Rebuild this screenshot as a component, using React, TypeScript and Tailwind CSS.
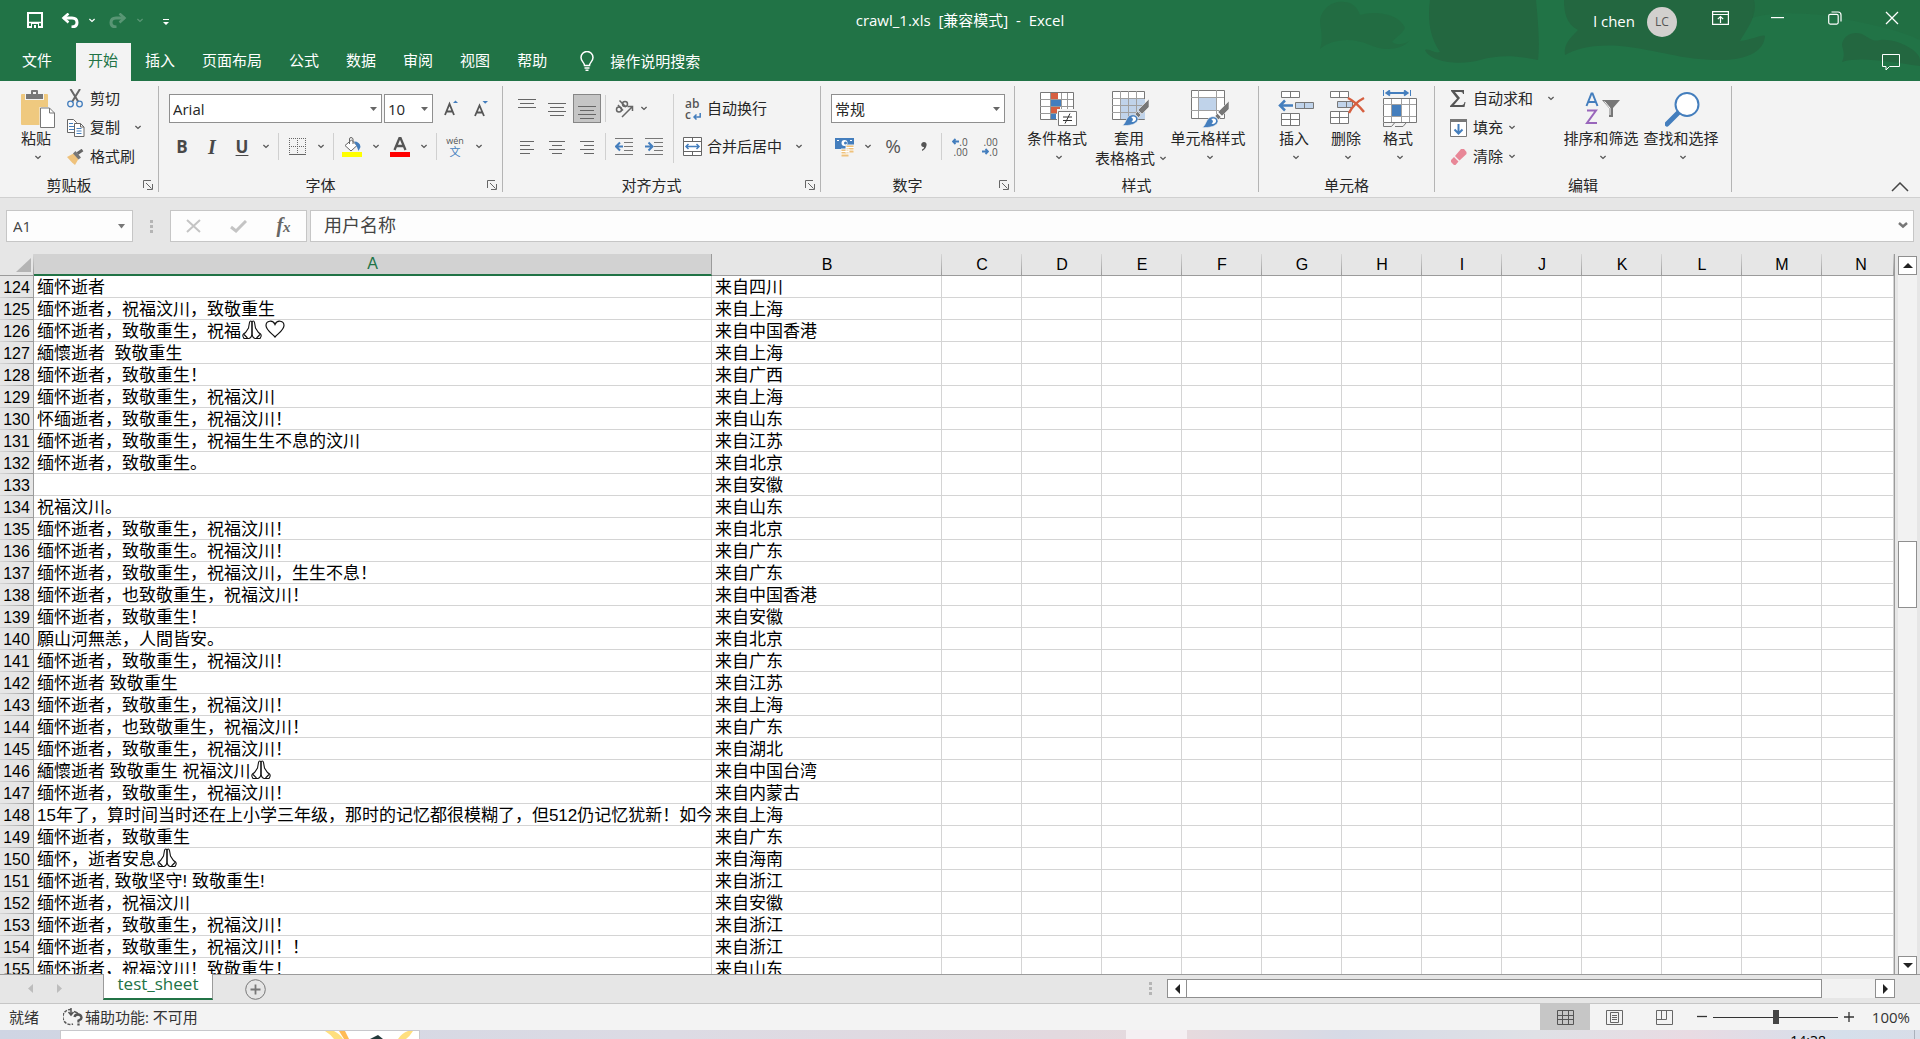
import type { ReactNode } from "react";

const UI_FONT = "font-['Open_Sans','Noto_Sans_CJK_SC',sans-serif]";
const CELL_FONT = "font-['Liberation_Sans','Noto_Sans_CJK_SC',sans-serif]";

type Row = { n: number; text: string; from: string; hands?: boolean; heart?: boolean };

const rows: Row[] = [
  { n: 124, text: "缅怀逝者", from: "来自四川" },
  { n: 125, text: "缅怀逝者，祝福汶川，致敬重生", from: "来自上海" },
  { n: 126, text: "缅怀逝者，致敬重生，祝福", from: "来自中国香港", hands: true, heart: true },
  { n: 127, text: "緬懷逝者  致敬重生", from: "来自上海" },
  { n: 128, text: "缅怀逝者，致敬重生！", from: "来自广西" },
  { n: 129, text: "缅怀逝者，致敬重生，祝福汶川", from: "来自上海" },
  { n: 130, text: "怀缅逝者，致敬重生，祝福汶川！", from: "来自山东" },
  { n: 131, text: "缅怀逝者，致敬重生，祝福生生不息的汶川", from: "来自江苏" },
  { n: 132, text: "缅怀逝者，致敬重生。", from: "来自北京" },
  { n: 133, text: "", from: "来自安徽" },
  { n: 134, text: "祝福汶川。", from: "来自山东" },
  { n: 135, text: "缅怀逝者，致敬重生，祝福汶川！", from: "来自北京" },
  { n: 136, text: "缅怀逝者，致敬重生。祝福汶川！", from: "来自广东" },
  { n: 137, text: "缅怀逝者，致敬重生，祝福汶川，生生不息！", from: "来自广东" },
  { n: 138, text: "缅怀逝者，也致敬重生，祝福汶川！", from: "来自中国香港" },
  { n: 139, text: "缅怀逝者，致敬重生！", from: "来自安徽" },
  { n: 140, text: "願山河無恙，人間皆安。", from: "来自北京" },
  { n: 141, text: "缅怀逝者，致敬重生，祝福汶川！", from: "来自广东" },
  { n: 142, text: "缅怀逝者 致敬重生", from: "来自江苏" },
  { n: 143, text: "缅怀逝者，致敬重生，祝福汶川！", from: "来自上海" },
  { n: 144, text: "缅怀逝者，也致敬重生，祝福汶川！", from: "来自广东" },
  { n: 145, text: "缅怀逝者，致敬重生，祝福汶川！", from: "来自湖北" },
  { n: 146, text: "緬懷逝者 致敬重生 祝福汶川", from: "来自中国台湾", hands: true },
  { n: 147, text: "缅怀逝者，致敬重生，祝福汶川！", from: "来自内蒙古" },
  { n: 148, text: "15年了，算时间当时还在上小学三年级，那时的记忆都很模糊了，但512仍记忆犹新！如今", from: "来自上海" },
  { n: 149, text: "缅怀逝者，致敬重生", from: "来自广东" },
  { n: 150, text: "缅怀，逝者安息", from: "来自海南", hands: true },
  { n: 151, text: "缅怀逝者, 致敬坚守! 致敬重生!", from: "来自浙江" },
  { n: 152, text: "缅怀逝者，祝福汶川", from: "来自安徽" },
  { n: 153, text: "缅怀逝者，致敬重生，祝福汶川！", from: "来自浙江" },
  { n: 154, text: "缅怀逝者，致敬重生，祝福汶川！！", from: "来自浙江" },
  { n: 155, text: "缅怀逝者，祝福汶川！致敬重生！", from: "来自山东" },
];

const columns = ["C", "D", "E", "F", "G", "H", "I", "J", "K", "L", "M", "N"];
const tabs = ["插入", "页面布局", "公式", "数据", "审阅", "视图", "帮助"];

/* ── Small building blocks ─────────────────────────────────────────── */

function Chevron({ className = "text-[#555]" }: { className?: string }) {
  return (
    <svg width="8" height="5" viewBox="0 0 8 5" className={`shrink-0 ${className}`} fill="none" stroke="currentColor" strokeWidth="1.2">
      <path d="M1.400 1 4 3.500 6.600 1" />
    </svg>
  );
}

function Tool({ label, className = "w-[30px]", children }: { label: string; className?: string; children: ReactNode }) {
  return (
    <button aria-label={label} className={`flex h-[29px] shrink-0 items-center justify-center ${className}`}>
      {children}
    </button>
  );
}

function ToolSep() {
  return <div className="mx-[3px] h-[27px] w-px shrink-0 bg-[#d0d0d0]" />;
}

function Launcher({ label }: { label: string }) {
  return (
    <button aria-label={label} className="flex w-5 shrink-0 items-center justify-center">
      <svg width="10" height="10" viewBox="0 0 10 10" fill="none" stroke="#666">
        <path d="M.5 8V.5H8M3 3l5.500 5.500M9.500 4v5.500H4" />
      </svg>
    </button>
  );
}

function Group({ title, launcher, className, children }: { title: string; launcher?: boolean; className: string; children: ReactNode }) {
  return (
    <>
      <section aria-label={title} className={`flex shrink-0 flex-col ${className}`}>
        <div className="h-[94px]">{children}</div>
        <div className="flex h-5">
          <div className="flex-1 text-center leading-5">{title}</div>
          {launcher && <Launcher label={`${title}设置`} />}
        </div>
      </section>
      <div className="my-[5px] w-px shrink-0 bg-[#b4b4b4]" />
    </>
  );
}

function BigButton({ label, second, className, children }: { label: string; second?: string; className: string; children: ReactNode }) {
  return (
    <button className={`flex shrink-0 flex-col items-center pt-[9px] leading-5 ${className}`}>
      <span className="flex h-[38px] items-center pl-1">{children}</span>
      <span className="whitespace-nowrap">{label}</span>
      {second ? (
        <span className="flex items-center gap-1 whitespace-nowrap pl-1">
          {second} <Chevron />
        </span>
      ) : (
        <span className="flex h-[18px] items-center pl-1"><Chevron /></span>
      )}
    </button>
  );
}

function LineButton({ label, chevron, children }: { label: string; chevron?: string; children: ReactNode }) {
  return (
    <button className="flex h-[29px] items-center whitespace-nowrap">
      <span className="flex w-[23px] items-center">{children}</span>
      {label}
      {chevron && <span className={chevron}><Chevron /></span>}
    </button>
  );
}

function Combo({ label, value, className }: { label: string; value: string; className: string }) {
  return (
    <div className={`relative h-[29px] shrink-0 ${className}`}>
      <select aria-label={label} defaultValue={value} className="h-full w-full appearance-none border border-[#8f8f8f] bg-white pl-[3px] text-[15px] leading-5 text-[#262626]">
        <option>{value}</option>
      </select>
      <svg width="7" height="4" viewBox="0 0 7 4" className="pointer-events-none absolute right-[5px] top-[13px]">
        <path d="M0 0h7L3.500 4z" fill="#666" />
      </svg>
    </div>
  );
}

/* ── Icons ─────────────────────────────────────────────────────────── */

function Lines({ widths, top = 0, align = "center" }: { widths: number[]; top?: number; align?: "left" | "center" | "right" }) {
  return (
    <svg width="18" height="20" viewBox="0 0 18 20" stroke="#666">
      {widths.map((w, i) => {
        const x = align === "left" ? 2 : align === "right" ? 16 - w : (18 - w) / 2;
        return <path key={i} d={`M${x} ${top + i * 4 + 0.5}h${w}`} />;
      })}
    </svg>
  );
}

function Indent({ flip }: { flip?: boolean }) {
  return (
    <svg width="18" height="17" viewBox="0 0 18 17" fill="none">
      <path d="M0 .5h18M9 4.500h9M9 8.500h9M9 12.500h9M0 16.500h18" stroke="#777" />
      <path d={flip ? "M0 8.500h6M3.500 4.500l4 4-4 4" : "M2 8.500h6M5 4.500l-4 4 4 4"} stroke="#447ebd" strokeWidth="2" />
    </svg>
  );
}

function PasteIcon() {
  return (
    <svg width="34" height="38" viewBox="0 0 34 38">
      <rect y="4" width="27" height="31" rx="1" fill="#efc97f" />
      <path d="M4 3h6V1q0-1 1-1h6q1 0 1 1v2h5v7H4z" fill="#f3f3f3" />
      <path d="M5 4h5V1q0-1 1-1h5q1 0 1 1v3h5v5H5z" fill="#777" />
      <rect x="12" y="2" width="3" height="2" fill="#f3f3f3" />
      <path d="M18.500 17h11l4.500 5v16H18.500z" fill="#f3f3f3" />
      <path d="M19.500 18h9l5 5v14.500h-14z" fill="#fff" stroke="#777" />
      <path d="M28.500 18v5h5" fill="none" stroke="#777" />
    </svg>
  );
}

function CutIcon() {
  return (
    <svg width="17" height="19" viewBox="0 0 17 19" fill="none">
      <path d="M3.500 0 11.500 13M13 0 5 13" stroke="#666" strokeWidth="2" />
      <circle cx="3.500" cy="15" r="2.800" stroke="#447ebd" strokeWidth="1.300" />
      <circle cx="12.500" cy="15" r="2.800" stroke="#447ebd" strokeWidth="1.300" />
    </svg>
  );
}

function CopyIcon() {
  return (
    <svg width="18" height="18" viewBox="0 0 18 18" fill="#fff">
      <path d="M.5 .5h6l3 3v10h-9z" stroke="#666" />
      <path d="M2 4.500h4M2 7.500h5M2 10.500h5" stroke="#447ebd" />
      <path d="M7.500 4.500h6l3.500 3.500v9.500h-9.500z" stroke="#666" />
      <path d="M13.500 4.500V8h3.500" fill="none" stroke="#666" />
      <path d="M9.500 9.500h5M9.500 12h5M9.500 14.500h5" stroke="#447ebd" />
    </svg>
  );
}

function PainterIcon() {
  return (
    <svg width="18" height="16" viewBox="0 0 18 16">
      <path d="M0 8 6.500 4.500l5 5.500-3.500 6-3-2.500z" fill="#efc27c" />
      <path d="M6 4.500 8.500 2l5.500 6.500-2.500 2z" fill="#777" />
      <path d="M10.500 4.500 15.500 1" stroke="#666" strokeWidth="3" />
    </svg>
  );
}

function FontSizeIcon({ up }: { up?: boolean }) {
  return (
    <svg width="14" height="18" viewBox="0 0 14 18" fill="none">
      <path d={up ? "M1 15 5.500 4 10 15M2.500 11.500h6" : "M1 16 5.500 5.500 10 16M2.500 12.500h6"} stroke="#555" strokeWidth="1.800" />
      <path d={up ? "M9 3 11.500 .5 14 3z" : "M8.500 1h5.500L11.200 3.800z"} fill="#447ebd" />
    </svg>
  );
}

function BucketIcon() {
  return (
    <svg width="20" height="20" viewBox="0 0 20 20" fill="none">
      <path d="M3 8.500 9.500 3l5.500 5.500L9 14z" fill="#fff" stroke="#666" />
      <path d="M7.500 7V2q0-1.500 1.500-1.500T11 2v5" stroke="#666" />
      <path d="M12 4.500q6 0 6.500 5.500l-2 4q-2-6-4.500-9.500" fill="#447ebd" />
      <path d="M0 15h20v5H0z" fill="#ff0" />
    </svg>
  );
}

function StyleBrush({ x, y }: { x: number; y: number }) {
  return (
    <g transform={`translate(${x} ${y})`}>
      <path d="M27 0v8l-7 7-4-4z" fill="#777" stroke="#f3f3f3" strokeWidth=".6" />
      <path d="M15.500 12.500 19 16l-2.500 2.500-3.500-3.500z" fill="#777" stroke="#f3f3f3" strokeWidth=".6" />
      <path d="M0 26.500c4-1.500 4-9 9-10.500 4-1 7 1 7 4.500-1 5-9 6.500-16 6z" fill="#447ebd" stroke="#f3f3f3" strokeWidth=".6" />
      <path d="M9 18c3-1.500 5.500 0 5 2.500-.5 2-3 3-4.500 2 2-1 2-3-.5-4.500z" fill="#fff" />
    </g>
  );
}

function ConditionalIcon() {
  return (
    <svg width="38" height="36" viewBox="0 0 38 36">
      <path d="M.5 1.500h33v27H.5z" fill="#fff" stroke="#777" />
      <path d="M11 2h7v6h-7zM11 16h9v6h-9z" fill="#d65f40" />
      <path d="M11 9h11v6H11zM11 23h5v5h-5z" fill="#447ebd" />
      <path d="M0 8.500h33M0 15.500h33M0 22.500h33M10.500 2v26M21.500 2v26M27.500 2v26" stroke="#999" fill="none" />
      <path d="M17 18h21v18H17z" fill="#f3f3f3" />
      <path d="M18.500 20.500h18v14h-18z" fill="#fff" stroke="#777" />
      <path d="M23 26h9M23 29.500h9M30 22.500l-5 10" stroke="#333" fill="none" />
    </svg>
  );
}

function TableStyleIcon() {
  return (
    <svg width="38" height="36" viewBox="0 0 38 36">
      <path d="M.5 .5h32v28H.5z" fill="#fff" stroke="#777" />
      <path d="M9 8h24v20H9z" fill="#c0d3ea" />
      <path d="M0 7.500h32M0 14.500h32M0 21.500h32M8.500 0v28M16.500 0v28M24.500 0v28" stroke="#a0a0a0" fill="none" />
      <StyleBrush x={10} y={8} />
    </svg>
  );
}

function CellStyleIcon() {
  return (
    <svg width="38" height="38" viewBox="0 0 38 38">
      <path d="M.5 .5h33v28H.5z" fill="#fff" stroke="#777" />
      <path d="M8 8h18v12H8z" fill="#c0d3ea" />
      <path d="M0 7.500h33M0 20.500h33M7.500 0v28M25.500 0v28" stroke="#a0a0a0" fill="none" />
      <StyleBrush x={11} y={11} />
    </svg>
  );
}

function InsertIcon() {
  return (
    <svg width="36" height="36" viewBox="0 0 36 36" fill="#fff" stroke="#777">
      <path d="M3.500 .5h18v6h-18zM12.500 .5v6M3.500 22.500h18v12h-18zM3.500 28.500h18M12.500 22.500v12" />
      <path d="M17.500 11.500h18v6h-18zM26.500 11.500v6" fill="#c0d3ea" />
      <path d="M2 14.500h13M7 9.500l-5 5 5 5" fill="none" stroke="#447ebd" strokeWidth="2.500" />
    </svg>
  );
}

function DeleteIcon() {
  return (
    <svg width="36" height="36" viewBox="0 0 36 36" fill="#fff" stroke="#777">
      <path d="M.5 .5h18v6H.500zM9.500 .5v6M.5 20.500h18v12H.5zM.5 26.500h18M9.500 20.500v12" />
      <path d="M7.500 10.500h15v6h-15zM16.500 10.500v6" fill="#c0d3ea" />
      <path d="M18 7c6 3 12 9 16 14M34 7c-6 3-12 9-15 15" fill="none" stroke="#d65f40" strokeWidth="2.500" />
    </svg>
  );
}

function FormatIcon() {
  return (
    <svg width="34" height="38" viewBox="0 0 34 38" fill="none">
      <path d="M.5 0v6M27.500 0v6" stroke="#447ebd" />
      <path d="M3 3h22M7 .5 3.500 3 7 5.500M21 .5 24.500 3 21 5.500" stroke="#447ebd" strokeWidth="2" />
      <path d="M.5 8.500h33v24H.5z" fill="#fff" stroke="#777" />
      <path d="M0 14.500h33M0 26.500h33M8.500 9v23M18.500 9v23M26.500 9v23" stroke="#a0a0a0" />
      <path d="M9 15h9v11H9z" fill="#447ebd" />
      <path d="M.5 33v3.500h8l3-3.500M12 36.500h8l3-3.500" stroke="#777" />
    </svg>
  );
}

function SortFilterIcon() {
  return (
    <svg width="36" height="34" viewBox="0 0 36 34" fill="none">
      <path d="M1.500 14 6.500 1.500h1L12.500 14M3 10h8" stroke="#447ebd" strokeWidth="2" />
      <path d="M2 18.500h9L2 31h10" stroke="#9966bb" strokeWidth="2" />
      <path d="M17 8h18l-7 8v9h-4v-9z" fill="#777" />
      <path d="M19.500 9.500l5.500 6.500v7" stroke="#fff" />
    </svg>
  );
}

function FindIcon() {
  return (
    <svg width="36" height="36" viewBox="0 0 36 36">
      <path d="M2 33 13 22" stroke="#447ebd" strokeWidth="5" strokeLinecap="round" />
      <circle cx="22" cy="13.500" r="11.500" fill="#fff" stroke="#447ebd" strokeWidth="2" />
    </svg>
  );
}

function HandsIcon() {
  return (
    <svg width="20" height="20" viewBox="0 0 20 20" fill="none" stroke="#111" strokeWidth="1.100" className="ml-px inline-block align-top">
      <path d="M10 13V2.500Q9.800 1 8.800 1T7.500 2.500L6.500 8 3.500 12.500 1.500 14q-1 1-.5 2.500l1 2h5Q10 17.500 10 13z" />
      <path d="M10 13V2.500Q10.200 1 11.200 1t1.300 1.500l1 5.500 3 4.500 2 1.500q1 1 .5 2.500l-1 2h-5Q10 17.500 10 13z" />
      <path d="M2 14.500 5.500 18M18 14.500 14.500 18" />
    </svg>
  );
}

function HeartIcon() {
  return (
    <svg width="20" height="18" viewBox="0 0 20 18" fill="none" stroke="#111" strokeWidth="1.200" className="ml-[3px] inline-block align-top">
      <path d="M10 17C7 13.500 1 10 1 5.500 1 .5 8-.5 10 4.500c2-5 9-4 9 1C19 10 13 13.500 10 17z" />
    </svg>
  );
}

/* ── Title bar and tabs ────────────────────────────────────────────── */

function TitleBar() {
  return (
    <header className="relative bg-[#217346] text-white">
      <svg width="640" height="81" viewBox="0 0 640 81" className="absolute right-0 top-0" fill="#236740">
        <path d="M40 49C44 38 40 28 40 20 42 6 56 0 64 2c8 0 14 6 16 13 15-5 40-1 45 13-3 6-10 10-13 14 6 4 14 2 18-2-10 12-30 10-40 5-20-9-40-5-50 4z" opacity=".6" />
        <path d="M150 0h106c2 20 4 45 2 60-18-4-38-6-58 0-20 6-50 2-55-10 5-2 9 4 15 2-12-17-12-37-10-52z" />
        <path d="M284 0h190c4 14-6 28-14 41 12-1 22-7 25-5-1 14-15 24-45 24-40 0-60-10-100-14-30-2-45 4-55 9-2-10 5-17 13-25-12-6-14-18-14-30z" />
        <path d="M474 0h166v40C620 30 590 24 550 16c-30-4-60-4-78 2z" opacity=".35" />
        <path d="M562 62c4-8 0-14 0-18 2-10 12-13 20-10 8 4 10 8 18 6 15-2 40 10 40 20v6c-30-4-60-10-78-4z" />
      </svg>

      <div className="relative grid h-[43px] grid-cols-[1fr_auto_1fr]">
        <div className="flex items-center pb-[3px] pl-5">
          <button aria-label="保存" className="flex w-[30px] justify-center">
            <svg width="16" height="16" viewBox="0 0 16 16" fill="none" stroke="#fff" strokeWidth="2">
              <path d="M1 1h14v14H1z" /><path d="M1 10.500h14" strokeWidth="1.500" /><path d="M4 11h8v4H4z" fill="#fff" stroke="none" /><path d="M5 12h6v4H5z" fill="#217346" stroke="none" /><path d="M7 13h2v3H7z" fill="#fff" stroke="none" />
            </svg>
          </button>
          <button aria-label="撤消" className="ml-1 flex w-8 justify-center">
            <svg width="18" height="15" viewBox="0 0 18 15" fill="none" stroke="#fff" strokeWidth="3">
              <path d="M2.500 5H11q5 0 5 4.500T10.500 14" /><path d="M7.500 .5 2.500 5l5 4.500" strokeWidth="2.500" />
            </svg>
          </button>
          <button aria-label="撤消列表" className="flex w-3 justify-center"><Chevron className="text-white" /></button>
          <button aria-label="恢复" className="ml-1 flex w-8 justify-center opacity-25">
            <svg width="18" height="15" viewBox="0 0 18 15" fill="none" stroke="#fff" strokeWidth="3">
              <path d="M15.500 5H7q-5 0-5 4.500T7.500 14" /><path d="M10.500 .5l5 4.500-5 4.500" strokeWidth="2.500" />
            </svg>
          </button>
          <button aria-label="恢复列表" className="flex w-3 justify-center opacity-25"><Chevron className="text-white" /></button>
          <button aria-label="自定义快速访问工具栏" className="ml-[14px] flex w-3 justify-center pt-1">
            <svg width="6" height="7" viewBox="0 0 6 7" fill="#fff"><path d="M0 0h6v1H0zM0 3h6L3 6z" /></svg>
          </button>
        </div>

        <h1 className="whitespace-pre text-[15px] leading-[41px]">crawl_1.xls  [兼容模式]  -  Excel</h1>

        <div className="flex items-center justify-end">
          <span className="mr-3 text-[15px]">l chen</span>
          <span className="mr-[15px] flex size-[30px] items-center justify-center rounded-full bg-[#d2d0ce] text-[12px] text-[#555]">LC</span>
          <button aria-label="功能区显示选项" className="flex h-9 w-[57px] items-center justify-center self-start">
            <svg width="17" height="14" viewBox="0 0 17 14" fill="none" stroke="#fff" strokeWidth="1.200">
              <path d="M.6 .6h15.800v12.800H.6zM.6 3.500h15.800M8.500 12V6M5.800 8.200 8.500 5.500l2.700 2.700" />
            </svg>
          </button>
          <button aria-label="最小化" className="flex h-9 w-[57px] items-center justify-center self-start">
            <svg width="13" height="2" viewBox="0 0 13 2"><path d="M0 0h13v1.200H0z" fill="#fff" /></svg>
          </button>
          <button aria-label="还原" className="flex h-9 w-[57px] items-center justify-center self-start">
            <svg width="14" height="14" viewBox="0 0 14 14" fill="none" stroke="#fff" strokeWidth="1.200">
              <rect x=".7" y="3.300" width="9.500" height="9.800" rx="1.500" /><path d="M3.500 1h6.500q3 0 3 3v6.500" />
            </svg>
          </button>
          <button aria-label="关闭" className="flex h-9 w-[57px] items-center justify-center self-start">
            <svg width="14" height="14" viewBox="0 0 14 14" stroke="#fff" strokeWidth="1.300"><path d="M1 1l12 12M13 1 1 13" /></svg>
          </button>
        </div>
      </div>

      <nav className="relative flex h-[38px] gap-[2px]">
        <button className="-mr-[2px] pb-1 pl-[22px] pr-6">文件</button>
        <button className="bg-[#f3f3f3] pb-1 pl-3 pr-[13px] text-[#217346]">开始</button>
        {tabs.map((t) => (
          <button key={t} className="pb-1 pl-3 pr-[13px]">{t}</button>
        ))}
        <button className="ml-[18px] flex items-center gap-4 pb-[2px]">
          <svg width="14" height="20" viewBox="0 0 14 20" fill="none" stroke="#fff" strokeWidth="1.500">
            <path d="M4.500 14.500c0-3-3.500-4-3.500-8a6 6 0 0 1 12 0c0 4-3.500 5-3.500 8zM4.500 17h5M5.500 19.200h3" />
          </svg>
          操作说明搜索
        </button>
        <button aria-label="批注" className="ml-auto mr-5 flex items-center">
          <svg width="18" height="17" viewBox="0 0 18 17" fill="none" stroke="#fff"><path d="M.5 .5h17v12H7.500L4 16v-3.500H.500z" /></svg>
        </button>
      </nav>
    </header>
  );
}

/* ── Ribbon ────────────────────────────────────────────────────────── */

function Ribbon() {
  return (
    <div className="flex h-[117px] border-b border-[#d0d0d0] bg-[#f3f3f3] text-[#262626]">
      <Group title="剪贴板" launcher className="w-[158px]">
        <div className="flex">
          <BigButton label="粘贴" className="ml-[14px] w-11"><PasteIcon /></BigButton>
          <div className="flex flex-col pl-[9px] pt-[3px]">
            <LineButton label="剪切"><CutIcon /></LineButton>
            <LineButton label="复制" chevron="ml-[14px]"><CopyIcon /></LineButton>
            <LineButton label="格式刷"><PainterIcon /></LineButton>
          </div>
        </div>
      </Group>

      <Group title="字体" launcher className="w-[343px]">
        <div className="flex flex-col gap-[9px] pt-[13px]">
          <div className="flex pl-[10px]">
            <Combo label="字体" value="Arial" className="mr-[2px] w-[213px]" />
            <Combo label="字号" value="10" className="w-[49px]" />
            <Tool label="增大字号" className="ml-[3px] w-[30px]"><FontSizeIcon up /></Tool>
            <Tool label="减小字号"><FontSizeIcon /></Tool>
          </div>
          <div className="flex items-center pl-2 text-[17px] text-[#484848]">
            <Tool label="加粗"><b>B</b></Tool>
            <Tool label="倾斜"><b className="font-['Liberation_Serif',serif] text-[20px] italic">I</b></Tool>
            <Tool label="下划线"><b className="underline decoration-1 underline-offset-2">U</b></Tool>
            <Tool label="下划线选项" className="w-[18px]"><Chevron /></Tool>
            <ToolSep />
            <Tool label="边框" className="w-[30px]">
              <svg width="17" height="17" viewBox="0 0 17 17" stroke="#666" fill="none">
                <path d="M0 .5h17M0 8.500h17M.5 0v16M8.500 0v16M16.500 0v16" strokeDasharray="1 1" />
                <path d="M0 16.500h17" />
              </svg>
            </Tool>
            <Tool label="边框选项" className="w-[18px]"><Chevron /></Tool>
            <ToolSep />
            <Tool label="填充颜色"><BucketIcon /></Tool>
            <Tool label="填充颜色选项" className="w-[18px]"><Chevron /></Tool>
            <Tool label="字体颜色">
              <svg width="20" height="20" viewBox="0 0 20 20" fill="none">
                <path d="M4.500 13 9.500 1h1L15.500 13M6.500 9h7" stroke="#555" strokeWidth="2.300" />
                <path d="M0 15h20v5H0z" fill="red" />
              </svg>
            </Tool>
            <Tool label="字体颜色选项" className="w-[18px]"><Chevron /></Tool>
            <ToolSep />
            <Tool label="拼音" className="w-[30px] flex-col">
              <span className="text-[9px] leading-[10px] text-[#555]">wén</span>
              <span className="text-[11px] leading-[11px] text-[#447ebd]">文</span>
            </Tool>
            <Tool label="拼音选项" className="w-[18px]"><Chevron /></Tool>
          </div>
        </div>
      </Group>

      <Group title="对齐方式" launcher className="w-[317px]">
        <div className="flex pl-[9px] pt-[13px]">
          <div className="flex flex-col gap-[9px]">
            <div className="flex items-center">
              <Tool label="顶端对齐"><Lines widths={[18, 14, 18]} top={0} /></Tool>
              <Tool label="垂直居中"><Lines widths={[18, 14, 18, 14]} top={4} /></Tool>
              <Tool label="底端对齐" className="mx-px w-7 border border-[#868686] bg-[#c5c5c5]"><Lines widths={[18, 14, 18, 14]} top={7} /></Tool>
              <ToolSep />
              <Tool label="方向">
                <svg width="20" height="20" viewBox="0 0 20 20" fill="none" stroke="#666" strokeWidth="1.500">
                  <circle cx="5" cy="10.500" r="2.500" /><path d="M4 6l5 5.500" /><path d="M5.500 1.500 12 8" /><circle cx="11" cy="5" r="2.500" /><path d="M8 18 18 8M13.500 7.500H18.500V12" />
                </svg>
              </Tool>
              <Tool label="方向选项" className="w-[10px]"><Chevron /></Tool>
            </div>
            <div className="flex items-center">
              <Tool label="左对齐"><Lines widths={[14, 10, 14, 10]} top={4} align="left" /></Tool>
              <Tool label="居中"><Lines widths={[16, 10, 16, 10]} top={4} /></Tool>
              <Tool label="右对齐"><Lines widths={[14, 10, 14, 10]} top={4} align="right" /></Tool>
              <ToolSep />
              <Tool label="减少缩进量"><Indent /></Tool>
              <Tool label="增加缩进量"><Indent flip /></Tool>
            </div>
          </div>
          <div className="ml-1 h-[69px] w-px bg-[#d0d0d0]" />
          <div className="flex flex-col gap-[9px] pl-[9px]">
            <button className="flex h-[29px] items-center gap-[6px]">
              <span className="relative w-[18px] pl-[2px] text-left text-[12px] font-semibold leading-[11px] text-[#555]">
                ab<br />c
                <svg width="8" height="7" viewBox="0 0 8 7" className="absolute bottom-0 right-0" fill="none" stroke="#447ebd" strokeWidth="1.500"><path d="M7.200 0v4H1M3.500 1.500 1 4l2.500 2.500" /></svg>
              </span>
              自动换行
            </button>
            <button className="flex h-[29px] items-center gap-[5px]">
              <svg width="19" height="19" viewBox="0 0 19 19" fill="#fff" stroke="#666">
                <path d="M.5 .5h18v18H.5zM.5 4.500h18M.5 14.500h18M9.500 .5v4M9.500 14.500v4" />
                <path d="M3 9.500h13M5.500 7 3 9.500 5.500 12M13.500 7 16 9.500 13.500 12" fill="none" stroke="#447ebd" strokeWidth="1.500" />
              </svg>
              合并后居中
              <span className="pl-2"><Chevron /></span>
            </button>
          </div>
        </div>
      </Group>

      <Group title="数字" launcher className="w-[193px]">
        <div className="flex flex-col gap-[9px] pl-[9px] pt-[13px]">
          <Combo label="数字格式" value="常规" className="ml-px w-[174px]" />
          <div className="flex items-center text-[#555]">
            <Tool label="会计数字格式">
              <svg width="20" height="20" viewBox="0 0 20 20">
                <path d="M0 1h19v11H0z" fill="#447ebd" /><circle cx="9.500" cy="6" r="3" fill="#fff" /><circle cx="10.500" cy="6" r="1.500" fill="#447ebd" /><path d="M2 3h2v1H2zM15 3h2v1h-2z" fill="#fff" />
                <path d="M6 12h8v8H6zM11 8h8v8h-8z" fill="#efc27c" stroke="#f3f3f3" /><path d="M6 14.500h8M6 17h8M11 10.500h8M11 13h8" stroke="#fff" />
              </svg>
            </Tool>
            <Tool label="会计格式选项" className="w-4"><Chevron /></Tool>
            <Tool label="百分比样式" className="w-[34px] text-[19px]">%</Tool>
            <Tool label="千位分隔样式" className="w-7">
              <svg width="6" height="9" viewBox="0 0 6 9"><path d="M3 0C5 0 6 1.500 5.500 3.500 5 6 3.500 8 1 9V7.500C2.500 7 3 6 3 5-1 5.500-.500 0 3 0z" fill="#555" /></svg>
            </Tool>
            <ToolSep />
            {["增加小数位数", "减少小数位数"].map((label, i) => (
              <Tool key={label} label={label}>
                <span className="flex flex-col items-end text-[10px] leading-[10px]">
                  <span className="flex items-center">{i === 0 && <DecimalArrow />}{i === 0 ? ".0" : ".00"}</span>
                  <span className="flex items-center">{i === 1 && <DecimalArrow right />}{i === 0 ? ".00" : ".0"}</span>
                </span>
              </Tool>
            ))}
          </div>
        </div>
      </Group>

      <Group title="样式" className="w-[243px]">
        <div className="flex pl-[7px]">
          <BigButton label="条件格式" className="w-[70px]"><ConditionalIcon /></BigButton>
          <BigButton label="套用" second="表格格式" className="w-[74px]"><TableStyleIcon /></BigButton>
          <BigButton label="单元格样式" className="w-[84px]"><CellStyleIcon /></BigButton>
        </div>
      </Group>

      <Group title="单元格" className="w-[175px]">
        <div className="flex pl-[9px]">
          <BigButton label="插入" className="w-[52px]"><InsertIcon /></BigButton>
          <BigButton label="删除" className="w-[52px]"><DeleteIcon /></BigButton>
          <BigButton label="格式" className="w-[52px]"><FormatIcon /></BigButton>
        </div>
      </Group>

      <Group title="编辑" className="w-[296px]">
        <div className="flex">
          <div className="flex w-[124px] flex-col pl-[15px] pt-[3px]">
            <LineButton label="自动求和" chevron="ml-[14px]">
              <svg width="16" height="17" viewBox="0 0 16 17"><path d="M1 0h13v4h-1q0-2-2-2H5l5 6-6 7h8q2 0 2.500-3h1l-1 5H0v-1l7-7.500L1 1z" fill="#555" /></svg>
            </LineButton>
            <LineButton label="填充" chevron="ml-[5px]">
              <svg width="17" height="18" viewBox="0 0 17 18"><path d="M.5 .5h16v17H.5z" fill="#fff" stroke="#777" /><path d="M0 0h17v3H0z" fill="#777" /><path d="M8.500 5v9M4.500 10.500l4 4 4-4" fill="none" stroke="#447ebd" strokeWidth="2" /></svg>
            </LineButton>
            <LineButton label="清除" chevron="ml-[5px]">
              <svg width="17" height="16" viewBox="0 0 17 16" fill="#e88797"><path d="M11 0h3l2.500 3v2L9.500 11.500 5 7zM4 8l4.500 4.500L5.500 16H4L1 13v-2z" /></svg>
            </LineButton>
          </div>
          <BigButton label="排序和筛选" className="w-[84px]"><SortFilterIcon /></BigButton>
          <BigButton label="查找和选择" className="w-[76px]"><FindIcon /></BigButton>
        </div>
      </Group>

      <button aria-label="折叠功能区" className="ml-auto mr-[11px] flex items-end pb-[5px]">
        <svg width="18" height="10" viewBox="0 0 18 10" fill="none" stroke="#444" strokeWidth="1.500"><path d="M1 9l8-8 8 8" /></svg>
      </button>
    </div>
  );
}

function DecimalArrow({ right }: { right?: boolean }) {
  return (
    <svg width="7" height="7" viewBox="0 0 7 7" fill="none" stroke="#447ebd" strokeWidth="1.800">
      <path d={right ? "M0 3.500h6M3.500 1 6 3.500 3.500 6" : "M7 3.500H1M3.500 1 1 3.500 3.500 6"} />
    </svg>
  );
}

/* ── Formula bar ───────────────────────────────────────────────────── */

function FormulaBar() {
  return (
    <div className="flex px-[6px] pb-3 pt-3 text-[#444]">
      <div className="relative h-8 w-[127px] shrink-0">
        <input aria-label="名称框" defaultValue="A1" className="h-full w-full border border-[#c6c6c6] bg-[#fdfdfd] pl-[6px] text-[15px]" />
        <svg width="7" height="5" viewBox="0 0 7 5" className="pointer-events-none absolute right-2 top-[14px]"><path d="M0 0h7L3.500 4.500z" fill="#777" /></svg>
      </div>
      <div className="flex w-[37px] shrink-0 flex-col items-center justify-center gap-[2px]">
        <i className="size-[3px] bg-[#b5b5b5]" /><i className="size-[3px] bg-[#b5b5b5]" /><i className="size-[3px] bg-[#b5b5b5]" />
      </div>
      <div className="flex h-8 w-[137px] shrink-0 items-center justify-center border border-[#c6c6c6] bg-[#fdfdfd]">
        <button aria-label="取消" className="flex w-[45px] justify-center">
          <svg width="15" height="14" viewBox="0 0 15 14" stroke="#c4c4c4" strokeWidth="2"><path d="M1 1l13 12M14 1 1 13" /></svg>
        </button>
        <button aria-label="输入" className="flex w-[45px] justify-center">
          <svg width="17" height="13" viewBox="0 0 17 13" fill="none" stroke="#c4c4c4" strokeWidth="3"><path d="M1 7l5 4L16 1" /></svg>
        </button>
        <button aria-label="插入函数" className="w-[45px] font-['Liberation_Serif',serif] text-[20px] font-bold italic leading-7 text-[#666]">
          f<span className="text-[15px]">x</span>
        </button>
      </div>
      <div className="relative ml-[3px] h-8 flex-1">
        <input aria-label="编辑栏" defaultValue="用户名称" className="h-full w-full border border-[#c6c6c6] bg-[#fdfdfd] pb-1 pl-[13px] text-[18px]" />
        <svg width="10" height="7" viewBox="0 0 10 7" className="pointer-events-none absolute right-[6px] top-3" fill="none" stroke="#777" strokeWidth="2.500"><path d="M1 1l4 3.500L9 1" /></svg>
      </div>
    </div>
  );
}

/* ── Sheet ─────────────────────────────────────────────────────────── */

const colHead =
  "border-b border-[#9b9b9b] bg-[linear-gradient(to_bottom,#d6d6d6,#9b9b9b)] bg-[length:1px_100%] bg-right bg-no-repeat p-0 font-normal";

function Sheet() {
  return (
    <div className="flex min-h-0 flex-1 border-b border-[#9b9b9b]">
      <div className="min-w-0 flex-1 overflow-hidden border-r border-[#9b9b9b]">
        <table className={`w-full table-fixed border-separate border-spacing-0 text-black ${CELL_FONT}`}>
          <colgroup>
            <col className="w-[34px]" />
            <col className="w-[678px]" />
            <col className="w-[230px]" />
            {columns.map((c) => <col key={c} className={c === "N" ? "" : "w-[80px]"} />)}
          </colgroup>
          <thead>
            <tr className="h-[22px] text-[16px] leading-5">
              <th aria-label="全选" className={colHead}>
                <svg width="15" height="14" viewBox="0 0 15 14" className="ml-4"><path d="M15 0v14H0z" fill="#b4b4b4" /></svg>
              </th>
              <th className="border-b-2 border-r border-b-[#217346] border-r-[#9b9b9b] bg-[#d2d2d2] p-0 font-normal text-[#217346]">A</th>
              <th className={colHead}><div className="pt-px">B</div></th>
              {columns.map((c) => (
                <th key={c} className={colHead}><div className={c === "N" ? "pl-[6px] pt-px" : "pt-px"}>{c}</div></th>
              ))}
            </tr>
          </thead>
          <tbody>
            {rows.map((r) => (
              <tr key={r.n} className="h-[22px] bg-white leading-[21px]">
                <th className="border-r border-[#9b9b9b] bg-[#e6e6e6] bg-[linear-gradient(to_right,#d6d6d6,#9b9b9b)] bg-[length:100%_1px] bg-bottom bg-no-repeat p-0 text-[16px] font-normal">
                  <div className="h-[22px] leading-6">{r.n}</div>
                </th>
                <td className="overflow-hidden whitespace-pre border-b border-r border-[#d4d4d4] p-0 pl-[3px] text-[17px]">
                  <div className="h-[21px] leading-[23px]">{r.text}{r.hands && <HandsIcon />}{r.heart && <HeartIcon />}</div>
                </td>
                <td className="border-b border-r border-[#d4d4d4] p-0 pl-[3px] text-[17px]">
                  <div className="h-[21px] leading-[23px]">{r.from}</div>
                </td>
                {columns.map((c) => <td key={c} className="border-b border-r border-[#d4d4d4] p-0" />)}
              </tr>
            ))}
          </tbody>
        </table>
      </div>

      <div className="-mb-px ml-[3px] mr-[3px] mt-[2px] flex w-[19px] shrink-0 flex-col bg-[#f2f2f2]">
        <button aria-label="向上滚动" className="flex h-[19px] shrink-0 items-center justify-center border border-[#8f8f8f] bg-white">
          <svg width="10" height="5" viewBox="0 0 10 5"><path d="M5 0l5 5H0z" fill="#222" /></svg>
        </button>
        <div className="grow-[266]" />
        <div className="h-[67px] border border-[#8f8f8f] bg-white" />
        <div className="grow-[348]" />
        <button aria-label="向下滚动" className="flex h-[19px] shrink-0 items-center justify-center border border-[#8f8f8f] bg-white">
          <svg width="10" height="5" viewBox="0 0 10 5"><path d="M5 5l5-5H0z" fill="#222" /></svg>
        </button>
      </div>
    </div>
  );
}

function SheetTabs() {
  return (
    <div className="flex h-7 shrink-0 items-start">
      <button aria-label="上一个工作表" className="ml-4 flex h-[26px] w-[29px] items-center justify-center">
        <svg width="5" height="9" viewBox="0 0 5 9"><path d="M5 0v9L0 4.500z" fill="#bdbdbd" /></svg>
      </button>
      <button aria-label="下一个工作表" className="flex h-[26px] w-[29px] items-center justify-center">
        <svg width="5" height="9" viewBox="0 0 5 9"><path d="M0 0v9l5-4.500z" fill="#bdbdbd" /></svg>
      </button>
      <button className="-mt-px ml-[29px] h-[26px] w-[110px] border-x border-b-2 border-x-[#9b9b9b] border-b-[#217346] bg-white pb-1 text-[17px] leading-5 text-[#217346]">
        test_sheet
      </button>
      <button aria-label="新工作表" className="ml-8 flex h-7 items-center">
        <svg width="21" height="21" viewBox="0 0 21 21" fill="none" stroke="#777"><circle cx="10.500" cy="10.500" r="9.800" /><path d="M10.500 5.500v10M5.500 10.500h10" strokeWidth="1.800" /></svg>
      </button>

      <div className="ml-auto mt-[7px] flex flex-col gap-[2px]">
        <i className="size-[3px] bg-[#b5b5b5]" /><i className="size-[3px] bg-[#b5b5b5]" /><i className="size-[3px] bg-[#b5b5b5]" />
      </div>
      <div className="ml-[15px] mr-[25px] mt-1 flex h-[19px] w-[728px] bg-[#f2f2f2]">
        <button aria-label="向左滚动" className="flex w-5 shrink-0 items-center justify-center border border-[#8f8f8f] bg-white">
          <svg width="5" height="10" viewBox="0 0 5 10"><path d="M5 0v10L0 5z" fill="#222" /></svg>
        </button>
        <div className="-ml-px w-[636px] border border-[#8f8f8f] bg-white" />
        <button aria-label="向右滚动" className="ml-auto flex w-5 shrink-0 items-center justify-center border border-[#8f8f8f] bg-white">
          <svg width="5" height="10" viewBox="0 0 5 10"><path d="M0 0v10l5-5z" fill="#222" /></svg>
        </button>
      </div>
    </div>
  );
}

/* ── Status bar ────────────────────────────────────────────────────── */

function StatusBar() {
  return (
    <footer className="flex h-[27px] shrink-0 items-center border-t border-[#c6c6c6] bg-[#f3f3f3] pl-[9px] pr-[10px] text-[#333]">
      <span>就绪</span>
      <button className="ml-6 flex items-center gap-[2px]">
        <svg width="20" height="18" viewBox="0 0 20 18" fill="none" stroke="#555" strokeWidth="1.500">
          <path d="M8 1.500A7.500 7.500 0 1 0 10 16" strokeDasharray="3 1.200" /><path d="M8 0v6M5.500 4 8 7l2.500-3M11 3.500q4 1 4 3" />
          <path d="M11.500 9q.5-2.500 3.500-2.500T18.500 9.500q0 2-3 3v2M15.500 15.500v2" strokeWidth="2.300" />
        </svg>
        辅助功能: 不可用
      </button>
      <button aria-label="普通" className="ml-auto flex h-[26px] w-[50px] items-center justify-center bg-[#c6c6c6]">
        <svg width="17" height="15" viewBox="0 0 17 15" fill="none" stroke="#555"><path d="M.5 .5h16v14H.5zM.5 5.500h16M.5 9.500h16M5.500 .5v14M11.500 .5v14" /></svg>
      </button>
      <button aria-label="页面布局" className="flex w-[49px] items-center justify-center">
        <svg width="17" height="15" viewBox="0 0 17 15" fill="none" stroke="#666"><path d="M.5 .5h16v14H.5zM4.500 2.500h8v10h-8zM6 5.500h5M6 7.500h5M6 9.500h5" /></svg>
      </button>
      <button aria-label="分页预览" className="flex w-[50px] items-center justify-center">
        <svg width="17" height="15" viewBox="0 0 17 15" fill="none" stroke="#666"><path d="M.5 .5h16v14H.5zM5.500 .5v9M10.500 .5v9H.5" /></svg>
      </button>
      <button aria-label="缩小" className="ml-2 mr-[6px] flex"><svg width="10" height="10" viewBox="0 0 10 10"><path d="M0 4.500h10" stroke="#333" strokeWidth="1.300" /></svg></button>
      <input
        type="range"
        aria-label="缩放"
        defaultValue={50}
        className="h-[14px] w-[125px] appearance-none bg-[linear-gradient(#333,#333)] bg-[length:100%_1px] bg-center bg-no-repeat [&::-webkit-slider-thumb]:h-[14px] [&::-webkit-slider-thumb]:w-[6px] [&::-webkit-slider-thumb]:appearance-none [&::-webkit-slider-thumb]:bg-[#444]"
      />
      <button aria-label="放大" className="ml-[6px] flex"><svg width="10" height="10" viewBox="0 0 10 10"><path d="M0 5h10M5 0v10" stroke="#333" strokeWidth="1.300" /></svg></button>
      <button className="ml-2 w-[48px] text-right">100%</button>
    </footer>
  );
}

/* Strip of desktop left visible under the window */
function DesktopStrip() {
  return (
    <div className="flex h-[9px] shrink-0 overflow-hidden bg-[linear-gradient(to_right,#cfd5e3,#dcdbe4_35%,#e2d9df_55%,#e6dade_62%,#d6dae6_70%,#dfe1e6_80%,#e8dbe3_88%,#d5dfeb_96%,#d8dde8)]">
      <div className="ml-[60px] h-full w-[360px] border-x border-t border-[#c8c8cc] bg-white">
        <svg width="358" height="8" viewBox="0 0 358 8">
          <path d="M264 0h9q6 3 9 8h-9q-4-5-9-8z" fill="#ffdf7e" />
          <path d="M278 0h6l4 8h-5z" fill="#ffbb55" />
          <path d="M309 8l8-4 5 4z" fill="#22393b" />
          <path d="M337 8q4-6 10-8h5q-3 5-7 8z" fill="#ffdf7e" />
        </svg>
      </div>
      <div className="ml-[706px] h-full w-[61px] bg-[#f4eff2]" />
      <time className="ml-auto mr-[88px] mt-1 text-[14px] leading-[14px] text-black">14:38</time>
      <div className="mr-[5px] h-full w-px bg-[#aab0bb]" />
    </div>
  );
}

export default function App() {
  return (
    <div className={`flex h-screen flex-col overflow-hidden bg-[#e6e6e6] text-[15px] ${UI_FONT}`}>
      <TitleBar />
      <Ribbon />
      <FormulaBar />
      <Sheet />
      <SheetTabs />
      <StatusBar />
      <DesktopStrip />
    </div>
  );
}
